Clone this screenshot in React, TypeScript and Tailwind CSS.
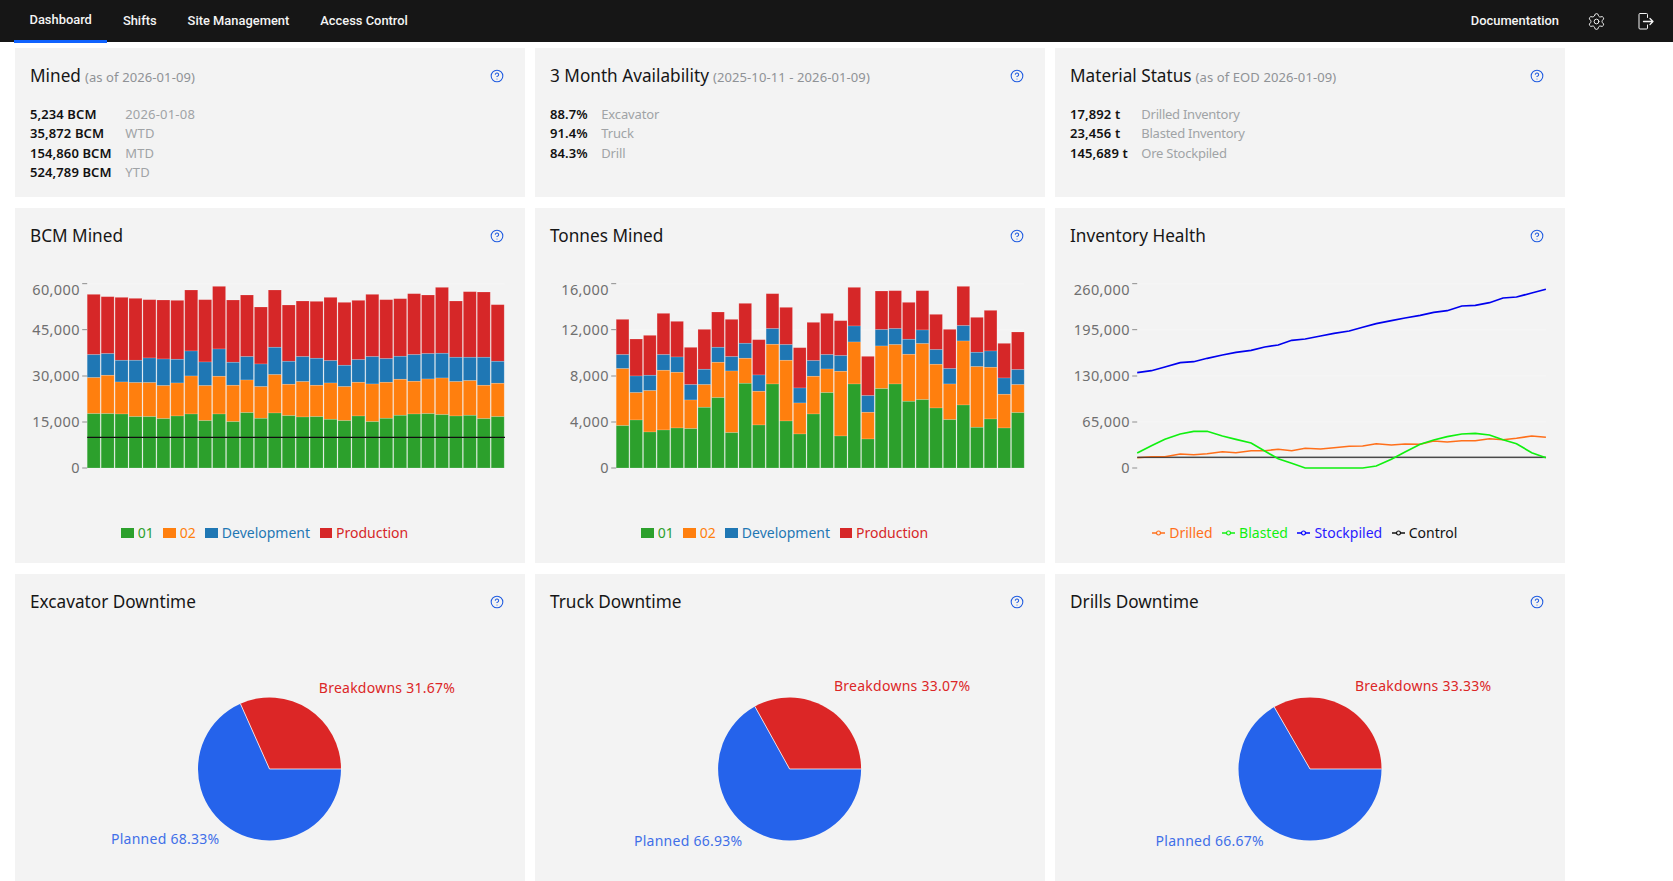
import React from "react";
import { CircleHelp, Settings } from "lucide-react";

const C = { g: "#2ca02c", o: "#ff7f0e", b: "#1f77b4", r: "#d62728" };

// All chart series are kept as y positions measured on a 3x grid (z), local y = z / 3 - 65
const ly = (z: number) => z / 3 - 65;

const bcm = {
  g: [626,626,627,635,635,641,633,627,647,627,650,623,640,624,632,636,635,643,647,633,650,640,631,627,626,629,633,631,641,635],
  o: [518,511,531,533,533,542,534,513,542,514,541,525,545,509,538,530,541,534,545,532,537,532,523,529,522,519,530,527,541,535],
  b: [449,446,466,466,459,462,463,438,471,432,472,455,477,427,469,455,460,467,481,464,455,461,454,449,446,445,457,457,457,469],
  r: [268,275,277,280,284,285,286,255,284,244,285,270,306,255,300,288,289,277,292,286,268,284,281,266,270,247,288,260,261,299],
};
const tonnes = {
  g: [662,645,681,675,669,671,607,578,683,535,660,537,648,687,627,563,693,537,702,551,537,589,584,609,644,600,667,642,669,623],
  o: [491,563,557,496,502,585,539,472,498,460,559,418,466,594,514,492,499,411,622,423,419,448,416,478,537,408,485,487,568,539],
  b: [449,513,511,449,456,539,493,427,455,415,510,371,419,549,467,449,452,363,572,374,371,403,375,434,491,362,442,438,519,494],
  r: [343,402,391,325,349,427,373,321,343,295,404,266,307,428,352,325,347,247,454,258,257,292,257,328,373,244,337,316,415,381],
};
const xs = [258,300,340,385,425,465,510,550,595,635,675,715,755,800,840,885,925,965,1010,1050,1095,1135,1175,1218,1258,1300,1340,1380,1425,1467];
const stock = [503,497,486,473,470,460,450,442,436,426,420,406,402,393,385,378,367,356,347,339,331,322,317,303,301,293,279,276,264,253];
const drilled = [758,755,755,747,749,746,740,743,737,737,733,737,730,732,728,724,723,716,720,717,718,708,711,707,707,701,704,700,693,697];
const blasted = [744,722,703,687,679,679,693,703,714,738,761,775,789,789,789,789,789,783,763,741,718,705,695,687,685,690,704,716,743,758];

const tickZ = [236, 374, 513, 651, 789];
const labelZ = [252, 373, 511, 649, 787];

function Axis({ labels, end, x0, x1 }: { labels: string[]; end: number; x0: number; x1: number }) {
  return (
    <g>
      {tickZ.map((z, i) => (
        <g key={z}>
          {i < 4 && <line x1={x0} x2={x1} y1={ly(z)} y2={ly(z)} stroke="#f6f6f6" strokeWidth={1} />}
          <line x1={x0 - 5} x2={x0} y1={ly(z)} y2={ly(z)} stroke="#8f8f8f" strokeWidth={1} />
          <text x={end} y={ly(labelZ[i])} textAnchor="end" dominantBaseline="central" fill="#6f6f6f" fontSize={14.5} letterSpacing={0.35}>
            {labels[i]}
          </text>
        </g>
      ))}
    </g>
  );
}

function Bars({ d, x0, pitch }: { d: typeof bcm; x0: number; pitch: number }) {
  const base = ly(789);
  return (
    <g>
      {d.g.map((_, i) => {
        const x = x0 + i * pitch;
        const w = pitch - 0.9;
        const seg = [
          { t: d.r[i], b: d.b[i], c: C.r },
          { t: d.b[i], b: d.o[i], c: C.b },
          { t: d.o[i], b: d.g[i], c: C.o },
          { t: d.g[i], b: 789, c: C.g },
        ];
        return (
          <g key={i}>
            {seg.map((s) => (
              <rect
                key={s.c}
                x={x}
                y={ly(s.t)}
                width={w}
                height={(s.b === 789 ? base : ly(s.b)) - ly(s.t)}
                fill={s.c}
                stroke="#ffffff"
                strokeOpacity={0.22}
                strokeWidth={0.8}
              />
            ))}
          </g>
        );
      })}
    </g>
  );
}

const lineX = (z: number) => z / 2.958 - 5;
const path = (ys: number[]) => ys.map((y, i) => `${i ? "L" : "M"}${lineX(xs[i]).toFixed(1)} ${ly(y).toFixed(1)}`).join(" ");

function Help() {
  return <CircleHelp size={14} strokeWidth={1.8} className="text-[#1d5ae0]" />;
}

function Card({ title, sub, children }: { title: string; sub?: string; children: React.ReactNode }) {
  return (
    <section className="bg-[#f3f3f3] overflow-hidden">
      <div className="flex items-center justify-between h-[24px] pb-[1px] mt-[16px] pl-[15px] pr-[21px]">
        <h2 className="text-[17.2px] text-[#161616] whitespace-nowrap">
          {title}
          {sub && <span className="text-[13px] text-[#8f9296] ml-[4px] tracking-[0.1px]">{sub}</span>}
        </h2>
        <Help />
      </div>
      {children}
    </section>
  );
}

function Stats({ rows, labelClass }: { rows: [string, string][]; labelClass: string }) {
  return (
    <div className="grid grid-cols-[max-content_1fr] gap-x-[13.5px] mt-[17px] pl-[15px] text-[13px] leading-[19.3px]">
      {rows.map(([a, b]) => (
        <React.Fragment key={b}>
          <div className="font-semibold text-[#111111] tracking-[0.1px]">{a}</div>
          <div className={`text-[#a0a3a6] ${labelClass}`}>{b}</div>
        </React.Fragment>
      ))}
    </div>
  );
}

function SquareLegend() {
  const items: [string, string, string][] = [
    ["01", "bg-[#2ca02c]", "text-[#2ca02c]"],
    ["02", "bg-[#ff7f0e]", "text-[#ff7f0e]"],
    ["Development", "bg-[#1f77b4]", "text-[#1f77b4]"],
    ["Production", "bg-[#d62728]", "text-[#d62728]"],
  ];
  return (
    <div className="flex justify-center items-start gap-x-[9.5px] h-[30px] pr-[10px] text-[14px] leading-[29px]">
      {items.map(([t, bg, fg]) => (
        <div key={t} className={`flex items-center gap-x-[4px] ${fg}`}>
          <span className={`w-[12.5px] h-[10px] ${bg}`} />
          {t}
        </div>
      ))}
    </div>
  );
}

function LineLegend() {
  const items: [string, string, string][] = [
    ["Drilled", "#ff6f1a", "text-[#ff6f1a]"],
    ["Blasted", "#10f010", "text-[#10f010]"],
    ["Stockpiled", "#0000ff", "text-[#2a1aff]"],
    ["Control", "#111111", "text-[#111111]"],
  ];
  return (
    <div className="flex justify-center items-start gap-x-[9.5px] h-[30px] pr-[10px] text-[14px] leading-[29px]">
      {items.map(([t, c, fg]) => (
        <div key={t} className={`flex items-center gap-x-[4px] ${fg}`}>
          <svg width={13} height={8} viewBox="0 0 13 8">
            <line x1={0} x2={13} y1={4} y2={4} stroke={c} strokeWidth={1.5} />
            <circle cx={6.5} cy={4} r={2} fill="#f3f3f3" stroke={c} strokeWidth={1.2} />
          </svg>
          {t}
        </div>
      ))}
    </div>
  );
}

function Pie({
  frac,
  cx,
  red,
  blue,
}: {
  frac: number;
  cx: number;
  red: [string, number, number];
  blue: [string, number, number];
}) {
  const cy = 133;
  const r = 71.5;
  const a = frac * 2 * Math.PI;
  const ex = cx + r * Math.cos(a);
  const ey = cy - r * Math.sin(a);
  return (
    <svg width={510} height={293} className="block mt-[22px] text-[14px] tracking-[0.25px]">
      <path d={`M${cx} ${cy} L${cx + r} ${cy} A${r} ${r} 0 1 1 ${ex} ${ey} Z`} fill="#2563eb" />
      <path d={`M${cx} ${cy} L${cx + r} ${cy} A${r} ${r} 0 0 0 ${ex} ${ey} Z`} fill="#dc2626" />
      <path d={`M${cx + r} ${cy} L${cx} ${cy} L${ex} ${ey}`} fill="none" stroke="#ffffff" strokeOpacity={0.85} strokeWidth={0.9} />
      <text x={red[1]} y={red[2] - 0.7} dominantBaseline="central" fill="#dc2626">{red[0]}</text>
      <text x={blue[1]} y={blue[2] - 0.7} dominantBaseline="central" fill="#3f6fe8">{blue[0]}</text>
    </svg>
  );
}

function Logout() {
  return (
    <svg width={16} height={17} viewBox="0 0 16 17" fill="none" stroke="#f4f4f4" strokeWidth={1} strokeLinecap="round" strokeLinejoin="round">
      <path d="M9.5 4.5V1.5a1 1 0 0 0-1-1H2a1 1 0 0 0-1 1V15a1 1 0 0 0 1 1h6.5a1 1 0 0 0 1-1v-3" />
      <path d="M5.5 8.5H15M12 5.5l3 3-3 3" strokeWidth={1.3} />
    </svg>
  );
}

export default function App() {
  const tabs = ["Shifts", "Site Management", "Access Control"];
  return (
    <div className="h-screen overflow-hidden bg-white font-['Noto_Sans','Open_Sans',sans-serif]">
      <header className="flex items-start h-[42px] bg-[#161616] text-[#f4f4f4] text-[12.9px] font-medium font-['Roboto','Noto_Sans',sans-serif] pl-[14px] pr-[19px]">
        <a className="h-[43px] px-[15.5px] flex items-center border-b-[3px] border-[#0f62fe]">Dashboard</a>
        {tabs.map((t) => (
          <a key={t} className="h-[42px] px-[15.5px] flex items-center">{t}</a>
        ))}
        <a className="ml-auto h-[42px] flex items-center">Documentation</a>
        <div className="h-[42px] flex items-center ml-[28px]"><Settings size={19} strokeWidth={1.2} /></div>
        <div className="h-[42px] flex items-center ml-[32px]"><Logout /></div>
      </header>
      <main className="grid grid-cols-[repeat(3,509.5px)] grid-rows-[149px_355px_355px] gap-x-[10.5px] gap-y-[11px] pt-[6px] pl-[15px]">
        <Card title="Mined" sub="(as of 2026-01-09)">
          <Stats labelClass="tracking-[0.2px]" rows={[["5,234 BCM", "2026-01-08"], ["35,872 BCM", "WTD"], ["154,860 BCM", "MTD"], ["524,789 BCM", "YTD"]]} />
        </Card>
        <Card title="3 Month Availability" sub="(2025-10-11 - 2026-01-09)">
          <Stats labelClass="tracking-[-0.15px]" rows={[["88.7%", "Excavator"], ["91.4%", "Truck"], ["84.3%", "Drill"]]} />
        </Card>
        <Card title="Material Status" sub="(as of EOD 2026-01-09)">
          <Stats labelClass="tracking-[-0.25px]" rows={[["17,892 t", "Drilled Inventory"], ["23,456 t", "Blasted Inventory"], ["145,689 t", "Ore Stockpiled"]]} />
        </Card>

        <Card title="BCM Mined">
          <svg width={510} height={248} className="block mt-[22px]">
            <Axis labels={["60,000", "45,000", "30,000", "15,000", "0"]} end={64.8} x0={72.2} x1={489.5} />
            <Bars d={bcm} x0={72.2} pitch={13.93} />
            <line x1={72.2} x2={490} y1={ly(697)} y2={ly(697)} stroke="#111111" strokeWidth={1.4} />
          </svg>
          <SquareLegend />
        </Card>
        <Card title="Tonnes Mined">
          <svg width={510} height={248} className="block mt-[22px]">
            <Axis labels={["16,000", "12,000", "8,000", "4,000", "0"]} end={73.8} x0={81.2} x1={489} />
            <Bars d={tonnes} x0={81.2} pitch={13.63} />
          </svg>
          <SquareLegend />
        </Card>
        <Card title="Inventory Health">
          <svg width={510} height={248} className="block mt-[22px]">
            <Axis labels={["260,000", "195,000", "130,000", "65,000", "0"]} end={74.8} x0={82.2} x1={491} />
            <line x1={lineX(258)} x2={lineX(1467)} y1={ly(757)} y2={ly(757)} stroke="#b5b5b5" strokeWidth={2} />
            <path d={path(drilled)} fill="none" stroke="#ff6f1a" strokeWidth={1.6} />
            <line x1={lineX(258)} x2={lineX(1467)} y1={ly(757)} y2={ly(757)} stroke="#333333" strokeWidth={1} />
            <path d={path(blasted)} fill="none" stroke="#10f010" strokeWidth={1.7} />
            <path d={path(stock)} fill="none" stroke="#0000ee" strokeWidth={1.7} />
          </svg>
          <LineLegend />
        </Card>

        <Card title="Excavator Downtime">
          <Pie frac={0.3167} cx={254.5} red={["Breakdowns 31.67%", 303.8, 52]} blue={["Planned 68.33%", 96, 203]} />
        </Card>
        <Card title="Truck Downtime">
          <Pie frac={0.3307} cx={254.6} red={["Breakdowns 33.07%", 299, 50]} blue={["Planned 66.93%", 99, 205]} />
        </Card>
        <Card title="Drills Downtime">
          <Pie frac={0.3333} cx={255} red={["Breakdowns 33.33%", 300, 50]} blue={["Planned 66.67%", 100.6, 205.5]} />
        </Card>
      </main>
    </div>
  );
}
